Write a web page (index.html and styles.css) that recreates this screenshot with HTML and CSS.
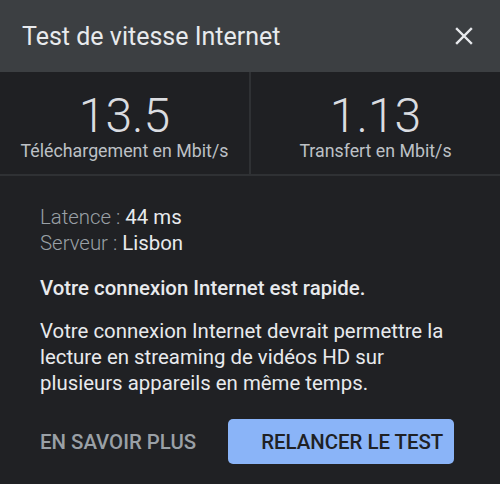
FILE: index.html
```html
<!DOCTYPE html>
<html lang="fr">
<head>
    <meta charset="UTF-8">
    <meta name="viewport" content="width=device-width, initial-scale=1.0">
    <title>Test de vitesse Internet</title>
    <link rel="stylesheet" href="styles.css">
</head>
<body>
    <div class="dialog">
        <header class="titre">
            <h1>Test de vitesse Internet</h1>
            <svg class="fermer" width="20" height="20" viewBox="0 0 20 20">
                <path d="M3 3 L17 17 M17 3 L3 17" stroke="#e8eaed" stroke-width="2.4" stroke-linecap="square"/>
            </svg>
        </header>
        <section class="mesures">
            <div class="mesure">
                <div class="valeur">13.5</div>
                <div class="unite">Téléchargement en Mbit/s</div>
            </div>
            <div class="mesure">
                <div class="valeur">1.13</div>
                <div class="unite">Transfert en Mbit/s</div>
            </div>
        </section>
        <section class="details">
            <div class="infos">
                <div><span class="etiquette">Latence :</span> 44 ms</div>
                <div><span class="etiquette">Serveur :</span> Lisbon</div>
            </div>
            <p class="verdict">Votre connexion Internet est rapide.</p>
            <p class="texte">Votre connexion Internet devrait permettre la lecture en streaming de vidéos HD sur plusieurs appareils en même temps.</p>
            <div class="actions">
                <button type="button" class="lien">EN SAVOIR PLUS</button>
                <button type="button" class="principal">RELANCER LE TEST</button>
            </div>
        </section>
    </div>
</body>
</html>
```

FILE: styles.css
```css
body {
    margin: 0;
    background-color: #202124;
    font-family: Roboto, "Liberation Sans", sans-serif;
    color: #e8eaed;
}
.dialog {
    width: 500px;
    height: 484px;
    overflow: hidden;
}
.titre {
    height: 72px;
    background-color: #3c3f42;
    display: flex;
    align-items: center;
    justify-content: space-between;
    padding: 0 26px 0 22px;
    box-sizing: border-box;
}
.titre h1 {
    margin: 0;
    font-size: 25px;
    font-weight: 400;
    color: #e8eaed;
}
.mesures {
    display: flex;
    background-color: #1f2023;
    border-bottom: 2px solid #2f3134;
    height: 104px;
    box-sizing: border-box;
}
.mesure {
    flex: 1;
    text-align: center;
    padding-top: 16px;
}
.mesure + .mesure {
    border-left: 2px solid #2f3134;
}
.valeur {
    font-size: 48px;
    font-weight: 300;
    line-height: 55px;
    color: #dadce0;
}
.unite {
    font-size: 17.8px;
    line-height: 16px;
    color: #bdc1c6;
}
.details {
    padding: 28px 40px 0 40px;
}
.infos {
    font-size: 20.4px;
    line-height: 26px;
    color: #e8eaed;
}
.etiquette {
    font-weight: 300;
    color: #9aa0a6;
}
.verdict {
    margin: 19px 0 0 0;
    font-size: 20.4px;
    font-weight: 500;
    line-height: 26px;
}
.texte {
    margin: 17px 0 0 0;
    font-size: 20.4px;
    line-height: 26px;
    color: #e8eaed;
}
.actions {
    display: flex;
    align-items: center;
    gap: 32px;
    margin-top: 23px;
}
button {
    font-family: Roboto, "Liberation Sans", sans-serif;
    font-size: 20.4px;
    font-weight: 500;
    border: none;
    cursor: pointer;
}
.lien {
    background: none;
    color: #9aa0a6;
    padding: 0;
}
.principal {
    background-color: #8ab4f8;
    color: #202124;
    border-radius: 5px;
    width: 226px;
    height: 45px;
    padding: 0 0 0 33px;
    text-align: left;
}
```
